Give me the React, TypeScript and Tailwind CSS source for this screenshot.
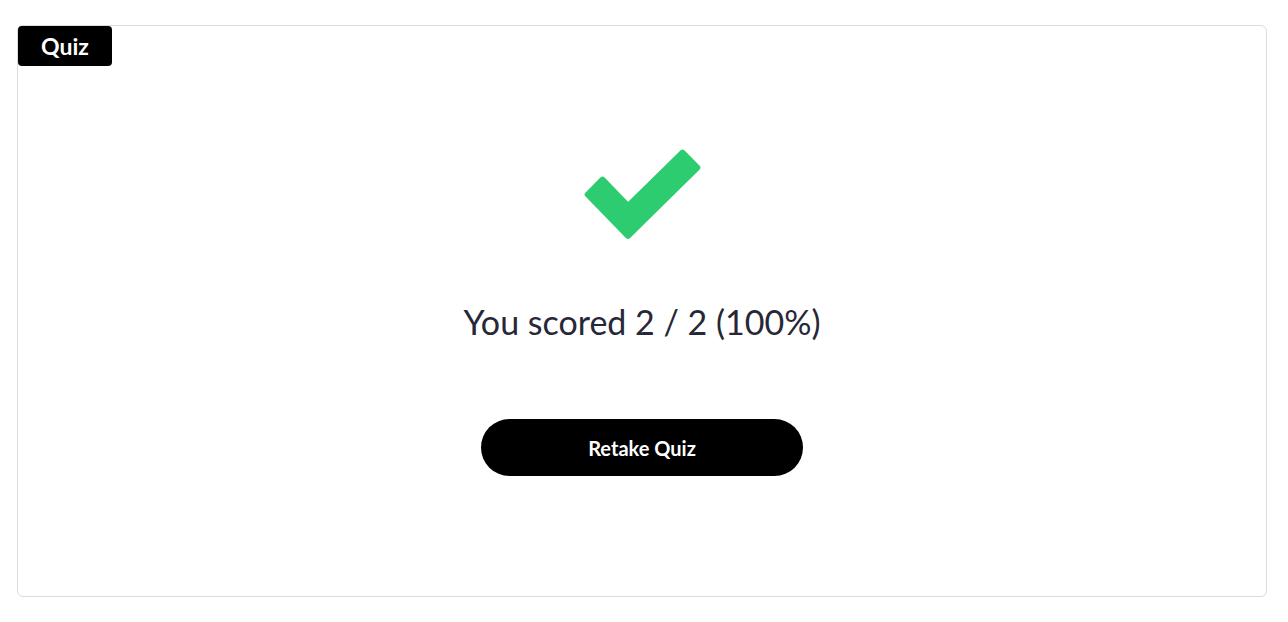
function CheckMark() {
  return (
    <svg width="126" height="98" viewBox="0 0 126 98" aria-hidden="true">
      <polygon
        points="7.7,48.5 22.5,33.7 48,60.2 102.5,6.7 117.3,21.5 48,89.9"
        fill="#2ecc71"
        stroke="#2ecc71"
        strokeWidth="6"
        strokeLinejoin="round"
      />
    </svg>
  );
}

export default function App() {
  return (
    <div className="min-h-screen bg-white px-[17px] pt-[25px] font-['Lato',sans-serif]">
      <div className="relative flex h-[572px] w-[1250px] flex-col items-center rounded-md border border-[#dcdcdc]">
        <div className="absolute left-0 top-0 flex h-10 w-[94px] items-center justify-center rounded-[4px] bg-black text-[23px] font-bold text-white">
          Quiz
        </div>

        <div className="mt-[120px] ml-[2px]">
          <CheckMark />
        </div>

        <p className="mt-[61px] text-[34px] leading-none text-[#262838]">
          You scored 2 / 2 (100%)
        </p>

        <button className="mt-[80px] flex h-[57px] w-[322px] items-center justify-center rounded-full bg-black text-[20px] font-bold text-white">
          Retake Quiz
        </button>
      </div>
    </div>
  );
}
